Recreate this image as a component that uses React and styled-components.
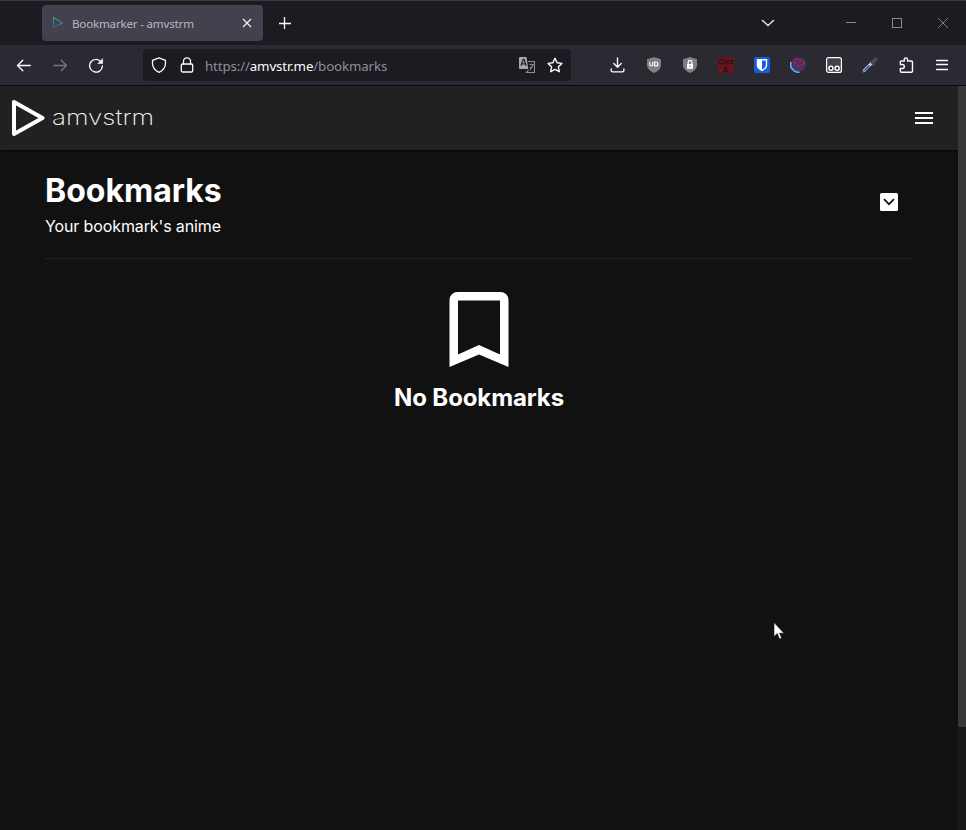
import React from "react";
import styled, { createGlobalStyle } from "styled-components";

const GlobalStyle = createGlobalStyle`
  * { box-sizing: border-box; }
  body { margin: 0; background: #111; overflow: hidden; }
  svg { display: block; flex: none; }
`;

const Window = styled.div`
  position: relative;
  width: 966px;
  height: 830px;
  display: flex;
  flex-direction: column;
  background: #111;
  color: #fff;
  font-family: Inter, sans-serif;
`;

const TabBar = styled.div`
  height: 45px;
  flex: none;
  display: flex;
  align-items: center;
  background: #1c1b22;
  border-top: 1px solid #3a3a3c;
  padding-left: 42px;
`;

const Tab = styled.div`
  width: 221px;
  height: 36px;
  display: flex;
  align-items: center;
  padding: 0 11px 0 10px;
  border-radius: 4px;
  background: #42414d;
  color: #b9b8bf;
`;

const TabTitle = styled.span`
  flex: 1;
  margin-left: 8px;
  padding-top: 1px;
  font: 11.6px/18px "Noto Sans", sans-serif;
  letter-spacing: -0.2px;
  white-space: nowrap;
`;

const NewTab = styled.div`
  margin: 0 0 0 16px;
`;

const WindowControls = styled.div`
  margin-left: auto;
  display: flex;
  align-items: center;
  color: #8b8b8e;
`;

const ControlCell = styled.div`
  width: ${(p) => p.$w || 46}px;
  display: flex;
  justify-content: center;
  color: ${(p) => p.$color || "inherit"};
`;

const Toolbar = styled.div`
  height: 41px;
  flex: none;
  display: flex;
  align-items: center;
  background: #2b2a33;
  border-bottom: 1px solid #0c0c0d;
  padding-left: 6px;
`;

const IconCell = styled.div`
  width: 36px;
  height: 32px;
  display: flex;
  align-items: center;
  justify-content: center;
  color: ${(p) => (p.$dim ? "#77767e" : "#fbfbfe")};
`;

const UrlBar = styled.div`
  width: 428px;
  height: 32px;
  margin: 0 29px;
  display: flex;
  align-items: center;
  padding: 0 8px;
  border-radius: 4px;
  background: #1c1b22;
  color: #fbfbfe;
`;

const UrlText = styled.span`
  flex: 1;
  margin-left: 10px;
  padding-top: 2px;
  font: 13.3px/18px "Noto Sans", sans-serif;
  letter-spacing: -0.13px;
  color: #8f8f96;
  b { font-weight: 400; color: #fbfbfe; }
`;

const IconGap = styled.div`
  width: 12px;
`;

const Viewport = styled.div`
  flex: 1;
  display: flex;
  min-height: 0;
`;

const Page = styled.main`
  width: 958px;
  display: flex;
  flex-direction: column;
`;

const Scrollbar = styled.div`
  width: 8px;
  background: #18181a;
`;

const ScrollThumb = styled.div`
  height: 641px;
  background: #383838;
`;

const SiteHeader = styled.header`
  height: 64px;
  display: flex;
  align-items: center;
  justify-content: space-between;
  padding: 0 25px 0 12px;
  background: #212121;
  box-shadow: 0 1px 2px #050505;
`;

const Logo = styled.div`
  display: flex;
  align-items: center;
`;

const LogoText = styled.span`
  margin: -2px 0 0 7px;
  font: 250 22px/28px Inter, sans-serif;
  transform: scaleX(1.18);
  transform-origin: left;
  color: #f4f4f4;
`;

const Heading = styled.section`
  margin: 0 46px 0 45px;
  height: 109px;
  padding: 20px 14px 0 0;
  display: flex;
  justify-content: space-between;
  border-bottom: 1px solid #212121;
`;

const Title = styled.h1`
  margin: 0;
  font: 700 32px/41px Inter, sans-serif;
`;

const Subtitle = styled.p`
  margin: 3px 0 0;
  font: 400 16px/24px Inter, sans-serif;
  letter-spacing: -0.12px;
`;

const DropButton = styled.div`
  width: 18px;
  height: 18px;
  margin-top: 23px;
  display: flex;
  align-items: center;
  justify-content: center;
  border-radius: 1.5px;
  background: #fff;
`;

const Empty = styled.section`
  display: flex;
  flex-direction: column;
  align-items: center;
  padding-top: 33px;
`;

const EmptyText = styled.h2`
  margin: 15px 0 0;
  font: 700 24px/32px Inter, sans-serif;
  letter-spacing: -0.1px;
`;

const Cursor = styled.svg`
  position: absolute;
  left: 773px;
  top: 622px;
`;

const Icon = ({ size = 16, w = 1.4, children }) => (
  <svg width={size} height={size} viewBox={`0 0 ${size} ${size}`} fill="none"
    stroke="currentColor" strokeWidth={w} strokeLinecap="round" strokeLinejoin="round">
    {children}
  </svg>
);

const ShieldBadge = ({ children }) => (
  <svg width="16" height="18" viewBox="0 0 16 18">
    <path d="M8 1 15 3.2V9c0 4-3.5 6.4-7 8-3.500-1.600-7-4-7-8V3.200Z" fill="#808080" />
    {children}
  </svg>
);

export default function App() {
  return (
    <Window>
      <GlobalStyle />
      <TabBar>
        <Tab>
          <svg width="12" height="14" viewBox="0 0 12 14">
            <defs>
              <linearGradient id="fav" x1="0" y1="0" x2="0" y2="1">
                <stop offset="0" stopColor="#36a07c" />
                <stop offset=".5" stopColor="#3b8285" />
                <stop offset="1" stopColor="#4c48a5" />
              </linearGradient>
            </defs>
            <path d="M1.500 1.500v10l9-4.600Z" fill="none" stroke="url(#fav)" strokeWidth="1.200" />
          </svg>
          <TabTitle>Bookmarker - amvstrm</TabTitle>
          <svg width="10" height="10" viewBox="0 0 10 10" stroke="#f0f0f4" strokeWidth="1.200">
            <path d="m1 1 8 8m0-8L1 9" />
          </svg>
        </Tab>
        <NewTab>
          <svg width="12" height="12" viewBox="0 0 12 12" stroke="#fbfbfe" strokeWidth="1.300">
            <path d="M5.500 0v12M0 6.500h12" />
          </svg>
        </NewTab>
        <WindowControls>
          <ControlCell $w={120} $color="#e4e4e8">
            <Icon size={14} w={1.500}><path d="m1.500 4.500 5.500 5 5.500-5" /></Icon>
          </ControlCell>
          <ControlCell>
            <svg width="10" height="10" stroke="currentColor"><path d="M0 4.500h10" /></svg>
          </ControlCell>
          <ControlCell>
            <svg width="10" height="10" fill="none" stroke="currentColor"><rect x=".5" y=".5" width="9" height="9" /></svg>
          </ControlCell>
          <ControlCell>
            <svg width="10" height="10" stroke="currentColor" strokeWidth=".9"><path d="m0 0 10 10M10 0 0 10" /></svg>
          </ControlCell>
        </WindowControls>
      </TabBar>

      <Toolbar>
        <IconCell><Icon w={1.350}><path d="M14.300 8.500H1.500M6.800 3.200 1.500 8.500l5.300 5.300" /></Icon></IconCell>
        <IconCell $dim><Icon w={1.300}><path d="M1.700 8.500h12.800M9.200 3.200l5.300 5.300-5.300 5.300" /></Icon></IconCell>
        <IconCell>
          <Icon w={1.350}>
            <path d="M13.400 5.300A6.400 6.400 0 1 0 14.400 9" />
            <path d="M14.600 2v4.500h-4.500Z" fill="currentColor" strokeWidth=".6" />
          </Icon>
        </IconCell>
        <UrlBar>
          <Icon w={1.300}><path d="M8 .8 14.500 3.400v2.800c0 4.500-2.800 7.400-6.500 9.200C4.300 13.600 1.500 10.700 1.500 6.200V3.400Z" /></Icon>
          <IconGap />
          <Icon w={1.300}>
            <rect x="2.300" y="7" width="11.400" height="8" rx="1.300" />
            <path d="M4.500 7V4.300a3.500 3.500 0 0 1 7 0V7" />
          </Icon>
          <UrlText>https://<b>amvstr.me</b>/bookmarks</UrlText>
          <svg width="16" height="16" viewBox="0 0 16 16">
            <path d="M1 0h6.500l1.800 12H1a1 1 0 0 1-1-1V1a1 1 0 0 1 1-1Z" fill="#a9a9ac" />
            <path d="m2 8.800 2.200-6.300h.8l2.200 6.300M3 6.800h3.300" fill="none" stroke="#29282f" strokeWidth="1.300" />
            <path d="M9 4.500h6.500v11h-8L9.500 13M10.500 7.500h3.500c0 2-1 3-2.500 3.800M12 6.500v1M11.500 10v3" fill="none" stroke="#8c8c91" strokeWidth="1.200" />
          </svg>
          <IconGap />
          <Icon w={1.400}><path d="m8 1.300 2.100 4.400 4.800.7-3.500 3.400.9 4.900L8 12.400l-4.300 2.300.9-4.900L1.100 6.400l4.800-.7Z" /></Icon>
        </UrlBar>
        <IconCell><Icon w={1.350}><path d="M7.500 .8v9M3.800 6.500l3.700 3.700 3.700-3.700M1.200 11.800v1.700a1.300 1.300 0 0 0 1.300 1.300h10.100a1.300 1.300 0 0 0 1.300-1.300v-1.700" /></Icon></IconCell>
        <IconCell>
          <ShieldBadge>
            <path d="M3.800 6v2.500c0 1.900 3 1.900 3 0V6M8.700 6v4h.8c3.400 0 3.400-4 0-4Z" fill="none" stroke="#fff" strokeWidth="1.100" />
          </ShieldBadge>
        </IconCell>
        <IconCell>
          <ShieldBadge>
            <rect x="5" y="8" width="6" height="4.800" fill="#fff" />
            <path d="M6.200 8V6.200a1.800 1.800 0 0 1 3.600 0V8" fill="none" stroke="#fff" strokeWidth="1.200" />
            <path d="M8 9.500v1.500" stroke="#777" />
          </ShieldBadge>
        </IconCell>
        <IconCell>
          <svg width="16" height="16" viewBox="0 0 16 16">
            <path d="M0 0h16v16H0z" fill="#62161c" />
            <path d="M1 9h1M4 12h1M2 14h1M12 10h1M14 13h1M11 14h1" stroke="#9a3029" />
            <text x="8" y="6.500" textAnchor="middle" fontFamily="Liberation Sans" fontSize="7.300" fill="#1d090b">Cors</text>
            <text x="8" y="14.500" textAnchor="middle" fontFamily="Liberation Sans" fontSize="8" fill="#1d090b">E</text>
          </svg>
        </IconCell>
        <IconCell>
          <svg width="16" height="16" viewBox="0 0 16 16">
            <rect width="16" height="16" rx="2" fill="#175ddc" />
            <path d="M2.800 2h10.400v6.500c0 2.500-2.500 4.400-5.200 5.700-2.700-1.300-5.200-3.200-5.200-5.700Z" fill="#fff" />
            <path d="M8 3.400h3.800v5.100c0 1.600-1.700 3-3.800 4.100Z" fill="#175ddc" />
          </svg>
        </IconCell>
        <IconCell>
          <svg width="16" height="16" viewBox="0 0 16 16">
            <circle cx="8.300" cy="7.600" r="7.400" fill="#5a2c5c" />
            <path d="M1 5C-.5 10 3 15.500 9.500 15.300" stroke="#4fb9ee" strokeWidth="1.700" fill="none" />
            <path d="M2.500 8c1 3.500 3.500 5.500 7.500 6" stroke="#3c3f7c" strokeWidth="1.500" fill="none" />
            <path d="M4 5.500h2M9 3h1.500M7 9h1.500M13 5.500h2M11 8h1M5.500 2h1.500" stroke="#c2284f" strokeWidth="1.400" />
          </svg>
        </IconCell>
        <IconCell>
          <svg width="16" height="16" viewBox="0 0 16 16" fill="none" stroke="#fff">
            <rect x=".6" y=".6" width="14.800" height="14.800" rx="2" fill="#424247" strokeWidth="1.200" />
            <circle cx="4.900" cy="11.200" r="2" strokeWidth="1.500" fill="#222" />
            <circle cx="11.100" cy="11.200" r="2" strokeWidth="1.500" fill="#222" />
          </svg>
        </IconCell>
        <IconCell>
          <svg width="16" height="16" viewBox="0 0 16 16" strokeLinecap="round">
            <path d="M2.500 13.200 9 6.700" stroke="#c9ccd5" strokeWidth="3" />
            <path d="M3 13 7 9" stroke="#304fc5" strokeWidth="1.700" />
            <path d="m8.300 4.500 3.600 3.700" stroke="#555558" strokeWidth="1.500" />
            <path d="m10.800 5.200 3-3" stroke="#4c4c4f" strokeWidth="3.600" />
            <path d="M1 15h.2" stroke="#9196a5" strokeWidth="1" />
          </svg>
        </IconCell>
        <IconCell>
          <Icon w={1.400}><path d="M2.300 7.500V5.200c0-.7.500-1.200 1.200-1.200h2.800V2.500a1.600 1.600 0 0 1 3.200 0V4h3.800c.7 0 1.200.500 1.200 1.200v8.800c0 .7-.5 1.200-1.200 1.200H3.500c-.7 0-1.200-.5-1.200-1.200v-2.500h2a1.900 1.900 0 0 0 0-4Z" /></Icon>
        </IconCell>
        <IconCell>
          <Icon w={1.300}><path d="M2.500 3.500h11M2.500 7.500h11M2.500 12.500h11" /></Icon>
        </IconCell>
      </Toolbar>

      <Viewport>
        <Page>
          <SiteHeader>
            <Logo>
              <svg width="33" height="37" viewBox="0 0 33 37">
                <path d="M2 2v32l28.500-16Z" fill="none" stroke="#fff" strokeWidth="4" strokeLinejoin="round" />
              </svg>
              <LogoText>amvstrm</LogoText>
            </Logo>
            <svg width="18" height="12" viewBox="0 0 18 12" fill="#fff">
              <path d="M0 0h18v2H0zM0 5h18v2H0zM0 10h18v2H0z" />
            </svg>
          </SiteHeader>
          <Heading>
            <div>
              <Title>Bookmarks</Title>
              <Subtitle>Your bookmark's anime</Subtitle>
            </div>
            <DropButton>
              <svg width="12" height="8" viewBox="0 0 12 8" fill="none" stroke="#111" strokeWidth="1.700">
                <path d="m1 1.200 5 5 5-5" />
              </svg>
            </DropButton>
          </Heading>
          <Empty>
            <svg width="60" height="75" viewBox="0 0 60 75">
              <path d="M8.500 0h43A8 8 0 0 1 59.500 8v67L30 62.500.5 75V8a8 8 0 0 1 8-8ZM9 8.500v54L30 53l21 9.500v-54Z" fill="#fff" fillRule="evenodd" />
            </svg>
            <EmptyText>No Bookmarks</EmptyText>
          </Empty>
        </Page>
        <Scrollbar><ScrollThumb /></Scrollbar>
      </Viewport>

      <Cursor width="12" height="19" viewBox="0 0 12 19">
        <path d="M1 .5v14l3.300-3L6.500 17l2.200-1-2.200-4.800H11Z" fill="#fff" stroke="#111" strokeWidth=".6" />
      </Cursor>
    </Window>
  );
}
